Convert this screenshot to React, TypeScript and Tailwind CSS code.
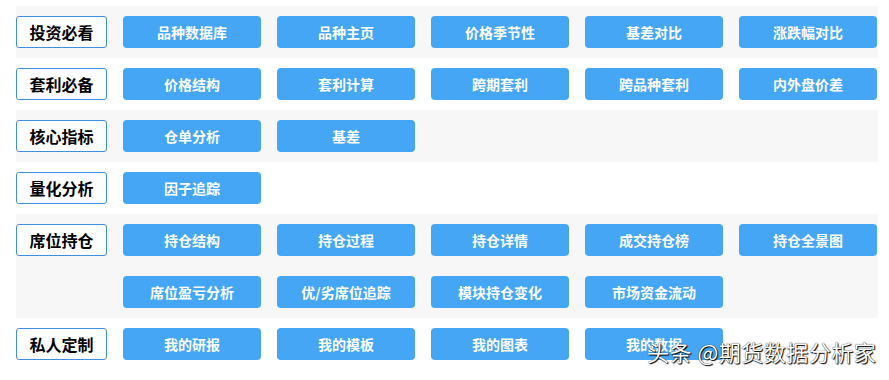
import React from "react";

interface Group {
  title: string;
  items: string[];
  gray: boolean;
}

const groups: Group[] = [
  { title: "投资必看", items: ["品种数据库", "品种主页", "价格季节性", "基差对比", "涨跌幅对比"], gray: true },
  { title: "套利必备", items: ["价格结构", "套利计算", "跨期套利", "跨品种套利", "内外盘价差"], gray: false },
  { title: "核心指标", items: ["仓单分析", "基差"], gray: true },
  { title: "量化分析", items: ["因子追踪"], gray: false },
  {
    title: "席位持仓",
    items: ["持仓结构", "持仓过程", "持仓详情", "成交持仓榜", "持仓全景图", "席位盈亏分析", "优/劣席位追踪", "模块持仓变化", "市场资金流动"],
    gray: true,
  },
  { title: "私人定制", items: ["我的研报", "我的模板", "我的图表", "我的数据"], gray: false },
];

const App = () => {
  return (
    <div
      className="relative w-[889px] h-[380px] bg-white pt-[6px] pl-4"
      style={{ fontFamily: '"Microsoft YaHei", "Noto Sans CJK SC", sans-serif' }}
    >
      {groups.map((g) => (
        <div
          key={g.title}
          className={`flex items-start w-[862px] py-[10px] ${g.gray ? "bg-[#f7f7f7]" : "bg-white"}`}
        >
          <div className="w-[91px] h-8 shrink-0 flex items-center justify-center border border-[#3f8fe0] rounded-[3px] bg-white text-black text-[16px] font-bold">
            {g.title}
          </div>
          <div className="ml-4 flex flex-wrap gap-x-4 gap-y-5 w-[754px]">
            {g.items.map((it) => (
              <button
                key={it}
                className="w-[138px] h-8 rounded-[4px] bg-[#44a6f5] text-white text-[14px] font-bold flex items-center justify-center"
              >
                {it}
              </button>
            ))}
          </div>
        </div>
      ))}
      {/* watermark */}
      <div className="absolute left-[647px] top-[335px] text-white text-[22px] tracking-[0.5px] [text-shadow:1px_1px_1px_#000,0_0_1px_#000] whitespace-nowrap">
        头条 @期货数据分析家
      </div>
    </div>
  );
};

export default App;
